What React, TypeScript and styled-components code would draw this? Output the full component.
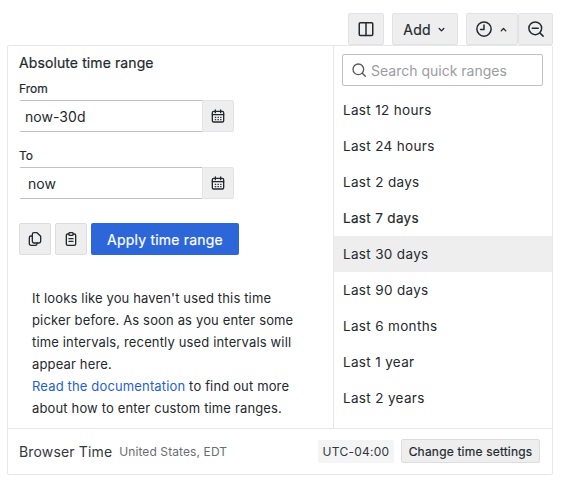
import React from "react";
import styled, { createGlobalStyle, css } from "styled-components";

const Global = createGlobalStyle`
  html, body { margin: 0; padding: 0; background: #fff; }
  body { font-family: Inter, "Liberation Sans", sans-serif; color: #24292e; }
  * { box-sizing: border-box; }
`;
const medium = css`font-weight: 400; -webkit-text-stroke: .2px currentColor;`;
const Page = styled.div`
  width: 566px; height: 484px; padding: 13px 13px 0 7px; display: flex; flex-direction: column; overflow: hidden;
`;
const Toolbar = styled.div`
  display: flex; justify-content: flex-end; height: 32px; gap: 8px; flex: none;
`;
const ToolButton = styled.button<{ $w: number }>`
  width: ${p => p.$w}px; height: 32px; padding: 0; margin: 0; display: flex; align-items: center; justify-content: center; gap: 5px;
  background: #eeeeef; border: 1px solid #e2e3e6; border-radius: 2px;
  font: 400 14px Inter, sans-serif; ${medium} color: #24292e; letter-spacing: .2px;
`;
const Group = styled.div`display: flex;`;
const Panel = styled.div`
  width: 546px; height: 430px; border: 1px solid #e6e7e9; border-radius: 2px; display: flex; flex-direction: column;
`;
const Body = styled.div`flex: 1; display: flex; min-height: 0;`;
const Left = styled.div`
  width: 326px; flex: none; border-right: 1px solid #e6e7e9; padding: 8px 11px 0 11px;
`;
const Title = styled.div`font-size: 14px; ${medium} line-height: 18px; color: #24292e; letter-spacing: .1px;`;
const Label = styled.div<{ $top: number }>`font-size: 12px; ${medium} line-height: 16px; margin-top: ${p => p.$top}px; color: #24292e;`;
const Field = styled.div`display: flex; margin-top: 3px; width: 215px;`;
const Input = styled.div<{ $pad: number }>`
  width: 182px; height: 32px; border-top: 1px solid #c0c1c4; border-bottom: 1px solid #c0c1c4; padding-left: ${p => p.$pad}px;
  display: flex; align-items: center; font-size: 14px; letter-spacing: .05px; color: #24292e; margin-left: 1px;
`;
const CalButton = styled.div`
  width: 32px; height: 32px; background: #eeeeef; border: 1px solid #e2e3e6; border-radius: 0 2px 2px 0; display: flex; align-items: center; justify-content: center;
`;
const Actions = styled.div`display: flex; gap: 4px; margin-top: 24px;`;
const IconButton = styled.div`
  width: 32px; height: 32px; background: #eeeeef; border: 1px solid #dcdde0; border-radius: 2px; display: flex; align-items: center; justify-content: center;
`;
const Apply = styled.button`
  width: 148px; height: 32px; padding: 0; background: #2c66d9; border: 0; border-radius: 2px; color: #fff; font: 400 14px Inter, sans-serif; ${medium} letter-spacing: .2px;
`;
const Help = styled.div`
  margin: 32px 0 0 13px; font-size: 13px; line-height: 22px; color: #24292e; letter-spacing: .15px; white-space: nowrap;
`;
const DocLink = styled.span`color: #1f5fd0;`;
const Right = styled.div`flex: 1; display: flex; flex-direction: column; padding-top: 8px;`;
const Search = styled.div`
  margin: 0 8px; width: 201px; height: 32px; border: 1px solid #c0c1c4; border-radius: 2px; display: flex; align-items: center; gap: 4px; padding-left: 8px;
  font-size: 14px; color: #9a9ca1; letter-spacing: 0;
`;
const List = styled.div`margin-top: 6px;`;
const Item = styled.div<{ $active?: boolean; $bold?: boolean }>`
  height: 36px; padding-left: 9px; display: flex; align-items: center; font-size: 13.5px; letter-spacing: .33px;
  ${p => p.$bold ? medium : "font-weight: 400;"} background: ${p => p.$active ? "#eeeeef" : "transparent"}; color: #24292e;
`;
const Footer = styled.div`
  height: 46px; flex: none; border-top: 1px solid #e6e7e9; display: flex; align-items: center; padding: 0 12px 0 11px;
`;
const Browser = styled.span`font-size: 14px; letter-spacing: .15px; color: #33373c;`;
const Zone = styled.span`font-size: 12px; margin-left: 7px; color: #6a6d72; letter-spacing: .1px;`;
const Offset = styled.span`
  margin-left: auto; width: 76px; height: 23px; background: #f4f4f5; border-radius: 2px; display: flex; align-items: center; justify-content: center; font-size: 12px; letter-spacing: .25px; color: #33373c;
`;
const Change = styled.button`
  margin: 0 0 1px 7px; width: 139px; height: 24px; padding: 0; background: #eeeeef; border: 1px solid #dcdde0; border-radius: 2px; font: 400 12px Inter, sans-serif; ${medium} color: #24292e; letter-spacing: .2px;
`;

const Svg = ({ s = 16, w = 2, children }: { s?: number; w?: number; children: React.ReactNode }) => (
  <svg width={s} height={s} viewBox="0 0 24 24" fill="none" stroke="#24292e" strokeWidth={w} strokeLinecap="round" strokeLinejoin="round">{children}</svg>
);
const Calendar = () => (
  <Svg>
    <rect x="3.5" y="5" width="17" height="16" rx="2" />
    <path d="M3.5 10h17M8 3v4M16 3v4" />
    <path d="M8 14h.5M12 14h.5M16 14h.5M8 17.5h.5M12 17.5h.5M16 17.5h.5" />
  </Svg>
);
const ranges = ["Last 12 hours", "Last 24 hours", "Last 2 days", "Last 7 days", "Last 30 days", "Last 90 days", "Last 6 months", "Last 1 year", "Last 2 years"];

export default function App() {
  return (
    <Page>
      <Global />
      <Toolbar>
        <ToolButton $w={36}>
          <Svg s={18}><rect x="3" y="3.5" width="18" height="17" rx="1.5" /><path d="M12 3.5v17" /></Svg>
        </ToolButton>
        <ToolButton $w={66}>Add
          <Svg s={11} w={3}><path d="M7 10l5 5 5-5" /></Svg>
        </ToolButton>
        <Group>
          <ToolButton $w={52}>
            <Svg s={18}><circle cx="12" cy="12" r="9.5" /><path d="M12 6.5V12.5H7.5" /></Svg>
            <Svg s={11} w={3}><path d="M7 15l5-5 5 5" /></Svg>
          </ToolButton>
          <ToolButton $w={35}>
            <Svg s={18}><circle cx="11" cy="11" r="8.5" /><path d="M7 11h8M17.5 17.5L21.5 21.5" /></Svg>
          </ToolButton>
        </Group>
      </Toolbar>
      <Panel>
        <Body>
          <Left>
            <Title>Absolute time range</Title>
            <Label $top={9}>From</Label>
            <Field>
              <Input $pad={5}>now-30d</Input>
              <CalButton><Calendar /></CalButton>
            </Field>
            <Label $top={16}>To</Label>
            <Field>
              <Input $pad={8}>now</Input>
              <CalButton><Calendar /></CalButton>
            </Field>
            <Actions>
              <IconButton>
                <Svg><path d="M8 7.5H6A2.5 2.5 0 0 0 3.5 10v9A2.5 2.5 0 0 0 6 21.5h6.5A2.5 2.5 0 0 0 15 19v-1" /><path d="M8 5a2.5 2.5 0 0 1 2.5-2.5H15L20.5 8v7.5a2.5 2.5 0 0 1-2.5 2.5h-7.5A2.5 2.5 0 0 1 8 15.5z" /></Svg>
              </IconButton>
              <IconButton>
                <Svg><rect x="5" y="4.5" width="14" height="17" rx="2" /><rect x="9" y="2.5" width="6" height="4" rx="1" fill="#eeeeef" /><path d="M9 11.5h6M9 15.5h6" /></Svg>
              </IconButton>
              <Apply>Apply time range</Apply>
            </Actions>
            <Help>
              It looks like you haven't used this time<br />
              picker before. As soon as you enter some<br />
              time intervals, recently used intervals will<br />
              appear here.<br />
              <DocLink>Read the documentation</DocLink> to find out more<br />
              about how to enter custom time ranges.
            </Help>
          </Left>
          <Right>
            <Search>
              <svg width="16" height="16" viewBox="0 0 24 24" fill="none" stroke="#55585d" strokeWidth={2} strokeLinecap="round"><circle cx="11" cy="11" r="8" /><path d="M17 17l4.5 4.5" /></svg>
              Search quick ranges
            </Search>
            <List>
              {ranges.map(r => (
                <Item key={r} $active={r === "Last 30 days"} $bold={r === "Last 7 days"}>{r}</Item>
              ))}
            </List>
          </Right>
        </Body>
        <Footer>
          <Browser>Browser Time</Browser>
          <Zone>United States, EDT</Zone>
          <Offset>UTC-04:00</Offset>
          <Change>Change time settings</Change>
        </Footer>
      </Panel>
    </Page>
  );
}
